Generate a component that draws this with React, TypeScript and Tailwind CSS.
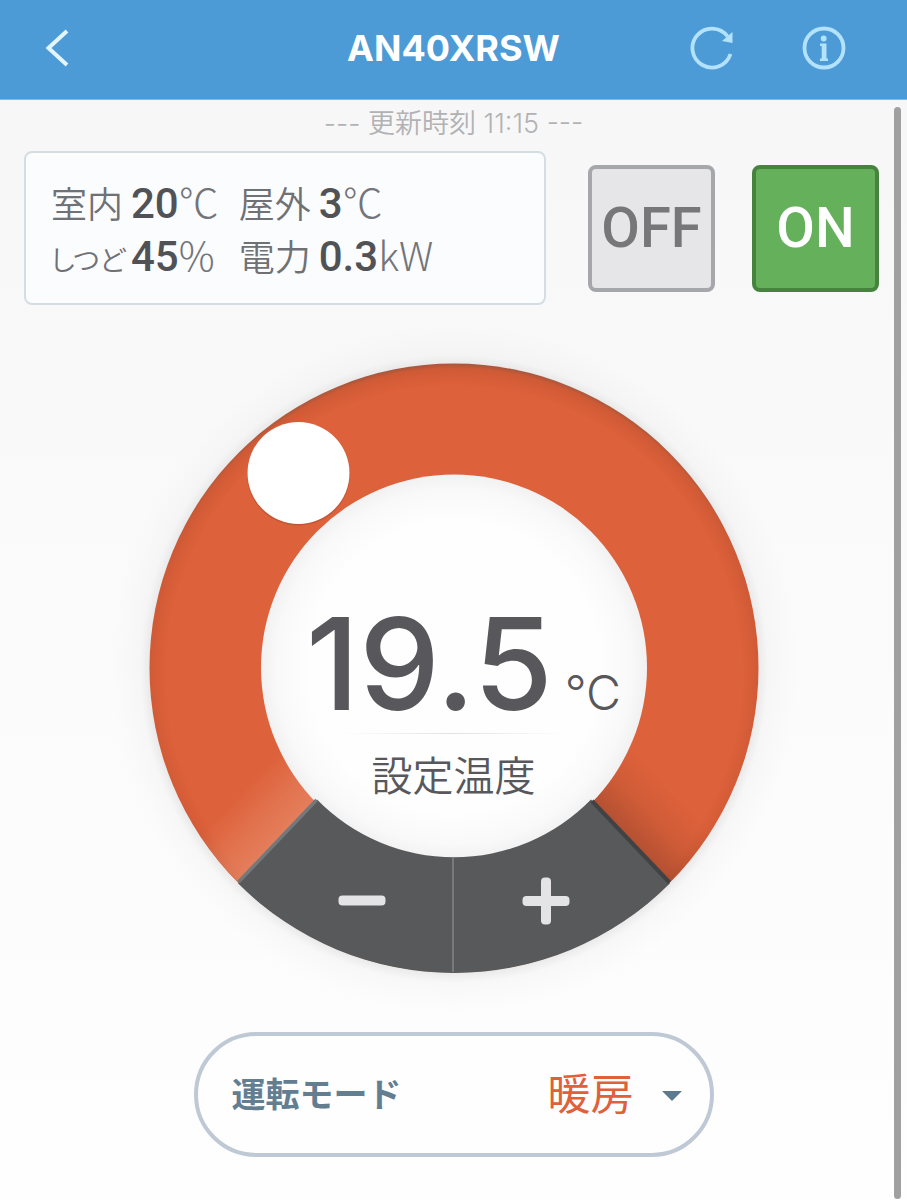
import { useState } from 'react';

interface Reading {
  label: string;
  value: string;
  unit: string;
}

const READINGS: Reading[][] = [
  [
    { label: '室内', value: '20', unit: '℃' },
    { label: 'しつど', value: '45', unit: '%' },
  ],
  [
    { label: '屋外', value: '3', unit: '℃' },
    { label: '電力', value: '0.3', unit: 'kW' },
  ],
];

const FONT = "font-['Inter','Noto_Sans_CJK_JP',sans-serif]";

const MIN_TEMP = 10;
const MAX_TEMP = 30;

function Header({ title }: { title: string }) {
  return (
    <header className="grid h-[99px] grid-cols-[1fr_auto_1fr] items-center bg-[#4d9bd6] px-10 pb-1">
      <div>
        <button type="button" aria-label="戻る" className="block p-1">
          <svg width="28" height="44" viewBox="0 0 28 44" fill="none" stroke="#e2f6ff" strokeWidth="4">
            <path d="M23 5 4.500 22 23 39" />
          </svg>
        </button>
      </div>
      <h1 className="text-4xl font-bold text-white">{title}</h1>
      <div className="flex items-center justify-end gap-[60px] pr-[17px]">
        <button type="button" aria-label="更新" className="p-1">
          <svg width="44" height="44" viewBox="0 0 44 44" fill="none">
            <path d="M40.500 28A19.500 19.500 0 1 1 37.500 10.300" stroke="#b3e2fd" strokeWidth="3.800" />
            <path d="M42.500 6V17L32 15Z" fill="#b3e2fd" />
          </svg>
        </button>
        <button type="button" aria-label="情報" className="p-1">
          <svg width="44" height="44" viewBox="0 0 44 44" fill="none">
            <circle cx="22" cy="22" r="19.500" stroke="#b3e2fd" strokeWidth="3.800" />
            <circle cx="21.700" cy="12.500" r="2.900" fill="#b3e2fd" />
            <path d="M18 17.500h6.500v15H26V35H18v-2.500h1.700V20H18Z" fill="#b3e2fd" />
          </svg>
        </button>
      </div>
    </header>
  );
}

function StatusPanel() {
  return (
    <div className="flex h-[154px] min-w-0 flex-1 gap-5 rounded-lg border-2 border-[#d3dde2] bg-[#fbfcfe] px-[25px] pt-6">
      {READINGS.map((column, i) => (
        <dl key={i}>
          {column.map((reading) => (
            <div key={reading.label} className="flex h-[53px] items-baseline whitespace-nowrap">
              <dt
                className={`w-20 leading-[53px] font-[350] text-[#6f7175] ${
                  reading.label.length > 2 ? "text-[28px] [font-feature-settings:'palt']" : 'text-4xl'
                }`}
              >
                {reading.label}
              </dt>
              <dd className="font-['Roboto',sans-serif] text-[42px] leading-[53px] font-medium text-[#515255]">
                {reading.value}
                <span className="font-['Noto_Sans_CJK_JP',sans-serif] text-[40px] leading-none font-light text-[#737579]">
                  {reading.unit}
                </span>
              </dd>
            </div>
          ))}
        </dl>
      ))}
    </div>
  );
}

function DialRing() {
  return (
    <svg viewBox="0 0 610 610" className="block w-full overflow-visible" aria-hidden="true">
      <defs>
        <radialGradient id="halo" cx="305" cy="306" r="345" gradientUnits="userSpaceOnUse">
          <stop offset="0.870" stopColor="#8a8a8a" stopOpacity="0.220" />
          <stop offset="0.910" stopColor="#999" stopOpacity="0.050" />
          <stop offset="1" stopColor="#aaa" stopOpacity="0" />
        </radialGradient>
        <radialGradient id="ring" cx="305" cy="311" r="310" gradientUnits="userSpaceOnUse">
          <stop offset="0.930" stopColor="#dd613a" />
          <stop offset="0.985" stopColor="#d05a36" />
          <stop offset="1" stopColor="#a9573c" />
        </radialGradient>
        <radialGradient id="face" cx="305" cy="304" r="193" gradientUnits="userSpaceOnUse">
          <stop offset="0.750" stopColor="#fefefe" />
          <stop offset="0.920" stopColor="#f9f9f9" />
          <stop offset="1" stopColor="#f1f1f1" />
        </radialGradient>
        <linearGradient id="shine" x1="128" y1="478" x2="84" y2="436" gradientUnits="userSpaceOnUse">
          <stop offset="0" stopColor="#eda184" stopOpacity="0.450" />
          <stop offset="0.400" stopColor="#eda184" stopOpacity="0.300" />
          <stop offset="1" stopColor="#eda184" stopOpacity="0" />
        </linearGradient>
        <linearGradient id="shade" x1="482" y1="478" x2="528" y2="434" gradientUnits="userSpaceOnUse">
          <stop offset="0" stopColor="#7a3a26" stopOpacity="0.420" />
          <stop offset="0.500" stopColor="#7a3a26" stopOpacity="0.140" />
          <stop offset="1" stopColor="#7a3a26" stopOpacity="0" />
        </linearGradient>
      </defs>
      <circle cx="305" cy="306" r="345" fill="url(#halo)" />
      <circle cx="305" cy="305" r="304.500" fill="url(#ring)" />
      <path d="M89 519A304.500 304.500 0 0 1 10 380L132 340L167 437Z" fill="url(#shine)" />
      <path d="M521 519A304.500 304.500 0 0 0 600 380L478 340L443 437Z" fill="url(#shade)" />
      <circle cx="305" cy="304.500" r="193" fill="url(#face)" />
      <path d="M168 436.500A191.500 191.500 0 0 0 442 436.500L521 520.300A305 305 0 0 1 89 520.300Z" fill="#58595b" />
      <path d="M167.500 437 89.500 519" stroke="#75787a" strokeWidth="3.500" />
      <path d="M443 438 520.500 519.500" stroke="#404244" strokeWidth="4" />
      <path d="M304 495V609" stroke="#828486" strokeWidth="1.500" />
      <circle cx="149.500" cy="111" r="51.500" fill="#9c4428" opacity="0.400" />
      <circle cx="149.500" cy="110" r="51" fill="#fff" />
    </svg>
  );
}

export default function App() {
  const [temp, setTemp] = useState(19.5);
  const [power, setPower] = useState(true);
  const [mode, setMode] = useState('暖房');

  const changeTemp = (next: number) => setTemp(Math.min(MAX_TEMP, Math.max(MIN_TEMP, next)));

  return (
    <div className={`flex min-h-screen flex-col bg-[#fdfdfd] ${FONT}`}>
      <Header title="AN40XRSW" />

      <main className="relative flex flex-1 flex-col border-t border-[#a5b0b8] bg-linear-to-b from-[#f7f7f7] via-[#fbfbfb] to-[#fefefe] pb-11">
        <p className="pt-1 text-center text-[27px] leading-10 font-[350] text-[#b2b2b4]">--- 更新時刻 11:15 ---</p>

        <section className="mt-[7px] flex items-center gap-[42px] pr-7 pl-6">
          <StatusPanel />
          <div className="flex gap-[37px] font-['Roboto',sans-serif] text-[56px] font-medium">
            <button
              type="button"
              aria-pressed={!power}
              onClick={() => setPower(false)}
              className="size-[127px] rounded-lg border-4 border-[#a6a7ab] bg-[#e6e6e9] text-[#77777a]"
            >
              OFF
            </button>
            <button
              type="button"
              aria-pressed={power}
              onClick={() => setPower(true)}
              className="size-[127px] rounded-lg border-4 border-[#46843e] bg-[#65b05b] text-white"
            >
              ON
            </button>
          </div>
        </section>

        <section className="relative mx-auto mt-[58px] w-[610px] max-w-full">
          <DialRing />
          <div className="absolute inset-x-0 top-[232px] flex flex-col items-center text-[#58585c]">
            <output className="flex items-baseline gap-3 pl-5">
              <span className="text-[128px] leading-[138px] font-medium">{temp.toFixed(1)}</span>
              <span className="text-5xl leading-none font-[350]">°C</span>
            </output>
            <div className="h-px w-56 bg-linear-to-r from-transparent via-[#e2e2e2] to-transparent" />
            <label htmlFor="target-temp" className="mt-3 text-[41px] leading-[60px] font-[350]">
              設定温度
            </label>
            <input
              id="target-temp"
              type="range"
              min={MIN_TEMP}
              max={MAX_TEMP}
              step={0.5}
              value={temp}
              onChange={(e) => changeTemp(Number(e.target.value))}
              className="sr-only"
            />
          </div>
          <div className="absolute inset-x-0 top-[498px] flex justify-center gap-[88px]">
            <button
              type="button"
              aria-label="温度を下げる"
              onClick={() => changeTemp(temp - 0.5)}
              className="flex h-20 w-24 items-center justify-center"
            >
              <svg width="48" height="48" viewBox="0 0 48 48" fill="#e4e4e6">
                <rect x="0.500" y="18.500" width="47" height="10" rx="4" />
              </svg>
            </button>
            <button
              type="button"
              aria-label="温度を上げる"
              onClick={() => changeTemp(temp + 0.5)}
              className="flex h-20 w-24 items-center justify-center"
            >
              <svg width="48" height="48" viewBox="0 0 48 48" fill="#e4e4e6">
                <rect x="0.500" y="19" width="47" height="10" rx="4" />
                <rect x="19" y="0.500" width="10" height="47" rx="4" />
              </svg>
            </button>
          </div>
        </section>

        <section className="relative mx-auto mt-[59px] flex h-[125px] w-[520px] max-w-full items-center justify-between rounded-full border-4 border-[#bfc9d5] bg-[#fefefe] pr-7 pl-[34px]">
          <label htmlFor="mode" className="text-[34px] font-bold text-[#637d91]">
            運転モード
          </label>
          <select
            id="mode"
            value={mode}
            onChange={(e) => setMode(e.target.value)}
            className="h-20 appearance-none bg-transparent pr-12 text-[43px] text-[#e0603a]"
          >
            <option>暖房</option>
            <option>冷房</option>
            <option>除湿</option>
          </select>
          <svg
            width="20"
            height="10"
            viewBox="0 0 20 10"
            className="pointer-events-none absolute top-[55px] right-7"
            aria-hidden="true"
          >
            <path d="M0 0H20L10 10Z" fill="#5c7a90" />
          </svg>
        </section>

        <div className="absolute top-[7px] right-1.5 bottom-0.5 w-[7px] rounded-full bg-[#a0a0a0]" />
      </main>
    </div>
  );
}
